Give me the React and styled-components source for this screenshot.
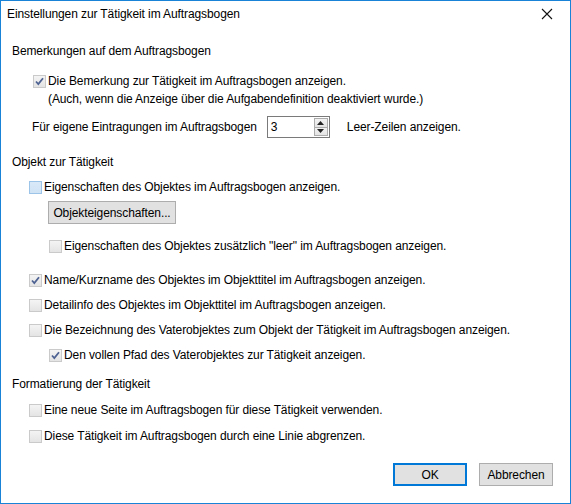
import React from "react";
import styled, { createGlobalStyle } from "styled-components";

const Global = createGlobalStyle`
  html, body { margin: 0; padding: 0; background: #ffffff; }
  body { font-family: "Segoe UI", "Liberation Sans", Arial, sans-serif; font-size: 12px; color: #000; letter-spacing: -0.1px; }
  * { box-sizing: border-box; }
`;

const Window = styled.div`
  width: 571px;
  height: 504px;
  border: 1px solid #1883d7;
  background: #fff;
  display: flex;
  flex-direction: column;
`;

const TitleBar = styled.div`
  height: 25px;
  display: flex;
  align-items: center;
  justify-content: space-between;
  padding-left: 6px;
  padding-right: 17px;
`;

const Title = styled.span`
  font-size: 12px;
  line-height: 16px;
`;

const CloseBtn = styled.span`
  width: 12px;
  height: 12px;
  display: flex;
`;

const Body = styled.div`
  flex: 1;
  display: flex;
  flex-direction: column;
  padding-left: 11px;
`;

const Heading = styled.div`
  margin-top: ${(p) => p.$mt}px;
  height: 16px;
  line-height: 16px;
`;

const CheckRow = styled.label`
  margin-top: ${(p) => p.$mt}px;
  margin-left: ${(p) => p.$indent}px;
  display: flex;
  align-items: flex-start;
  gap: 2px;
  line-height: ${(p) => (p.$multi ? 18 : 16)}px;
`;

const BoxWrap = styled.span`
  flex: none;
  width: 13px;
  height: 13px;
  margin-top: ${(p) => (p.$multi ? 3 : 2)}px;
  border: 1px solid ${(p) => (p.$focus ? "#9cc4e8" : "#cacaca")};
  background: ${(p) =>
    p.$focus
      ? "linear-gradient(#d9e9f8, #cfe3f5)"
      : "linear-gradient(#f4f4f4, #e4e4e4)"};
  display: flex;
  align-items: center;
  justify-content: center;
`;

const Lines = styled.span`
  display: flex;
  flex-direction: column;
`;

const Box = ({ checked, focus, multi }) => (
  <BoxWrap $focus={focus} $multi={multi}>
    {checked && (
      <svg width="11" height="11" viewBox="0 0 11 11">
        <path d="M2 5.5 L4.3 8 L9 2.2" fill="none" stroke="#4f6393" strokeWidth="1.8" />
      </svg>
    )}
  </BoxWrap>
);

const Check = ({ mt, indent = 17, checked, focus, lines }) => (
  <CheckRow $mt={mt} $indent={indent} $multi={lines.length > 1}>
    <Box checked={checked} focus={focus} multi={lines.length > 1} />
    <Lines>
      {lines.map((l, i) => (
        <span key={i}>{l}</span>
      ))}
    </Lines>
  </CheckRow>
);

const SpinRow = styled.div`
  margin-top: ${(p) => p.$mt}px;
  margin-left: 20px;
  height: 22px;
  display: flex;
  align-items: center;
`;

const SpinBox = styled.div`
  margin-left: 10px;
  width: 63px;
  height: 22px;
  border: 1px solid #7a7a7a;
  display: flex;
  align-items: stretch;
  padding: 1px;
`;

const SpinValue = styled.span`
  flex: 1;
  padding-left: 2px;
  line-height: 18px;
`;

const SpinButtons = styled.span`
  width: 14px;
  display: flex;
  flex-direction: column;
`;

const SpinBtn = styled.span`
  flex: 1;
  border: 1px solid #acacac;
  background: linear-gradient(#f2f2f2, #e4e4e4);
  display: flex;
  align-items: center;
  justify-content: center;
  & + & { border-top: none; }
`;

const SpinAfter = styled.span`
  margin-left: 17px;
`;

const PushButton = styled.button`
  margin-top: ${(p) => p.$mt || 0}px;
  margin-left: ${(p) => p.$ml || 0}px;
  align-self: flex-start;
  height: 23px;
  width: ${(p) => p.$w}px;
  font: inherit;
  font-size: 12px;
  letter-spacing: -0.1px;
  color: #000;
  background: #e1e1e1;
  border: ${(p) => (p.$default ? "2px solid #0078d7" : "1px solid #adadad")};
  padding: 0;
`;

const Footer = styled.div`
  display: flex;
  justify-content: flex-end;
  gap: 12px;
  padding-right: 17px;
  margin-top: 19px;
`;

export default function App() {
  return (
    <>
      <Global />
      <Window>
        <TitleBar>
          <Title>Einstellungen zur Tätigkeit im Auftragsbogen</Title>
          <CloseBtn>
            <svg width="12" height="12" viewBox="0 0 12 12">
              <path d="M1 1 L11 11 M11 1 L1 11" stroke="#111" strokeWidth="1.1" />
            </svg>
          </CloseBtn>
        </TitleBar>
        <Body>
          <Heading $mt={17}>Bemerkungen auf dem Auftragsbogen</Heading>
          <Check
            mt={13}
            indent={21}
            checked
            lines={[
              "Die Bemerkung zur Tätigkeit im Auftragsbogen anzeigen.",
              "(Auch, wenn die Anzeige über die Aufgabendefinition deaktiviert wurde.)",
            ]}
          />
          <SpinRow $mt={8}>
            <span>Für eigene Eintragungen im Auftragsbogen</span>
            <SpinBox>
              <SpinValue>3</SpinValue>
              <SpinButtons>
                <SpinBtn>
                  <svg width="7" height="4" viewBox="0 0 7 4">
                    <path d="M0 4 L3.5 0 L7 4 Z" fill="#222" />
                  </svg>
                </SpinBtn>
                <SpinBtn>
                  <svg width="7" height="4" viewBox="0 0 7 4">
                    <path d="M0 0 L3.5 4 L7 0 Z" fill="#222" />
                  </svg>
                </SpinBtn>
              </SpinButtons>
            </SpinBox>
            <SpinAfter>Leer-Zeilen anzeigen.</SpinAfter>
          </SpinRow>
          <Heading $mt={16}>Objekt zur Tätigkeit</Heading>
          <Check mt={9} focus lines={["Eigenschaften des Objektes im Auftragsbogen anzeigen."]} />
          <PushButton $mt={6} $ml={36} $w={128}>Objekteigenschaften...</PushButton>
          <Check
            mt={14}
            indent={37}
            lines={['Eigenschaften des Objektes zusätzlich "leer" im Auftragsbogen anzeigen.']}
          />
          <Check mt={18} checked lines={["Name/Kurzname des Objektes im Objekttitel im Auftragsbogen anzeigen."]} />
          <Check mt={9} lines={["Detailinfo des Objektes im Objekttitel im Auftragsbogen anzeigen."]} />
          <Check
            mt={9}
            lines={["Die Bezeichnung des Vaterobjektes zum Objekt der Tätigkeit im Auftragsbogen anzeigen."]}
          />
          <Check mt={9} indent={37} checked lines={["Den vollen Pfad des Vaterobjektes zur Tätigkeit anzeigen."]} />
          <Heading $mt={13}>Formatierung der Tätigkeit</Heading>
          <Check mt={10} lines={["Eine neue Seite im Auftragsbogen für diese Tätigkeit verwenden."]} />
          <Check mt={10} lines={["Diese Tätigkeit im Auftragsbogen durch eine Linie abgrenzen."]} />
          <Footer>
            <PushButton $default $w={74}>OK</PushButton>
            <PushButton $w={74}>Abbrechen</PushButton>
          </Footer>
        </Body>
      </Window>
    </>
  );
}
